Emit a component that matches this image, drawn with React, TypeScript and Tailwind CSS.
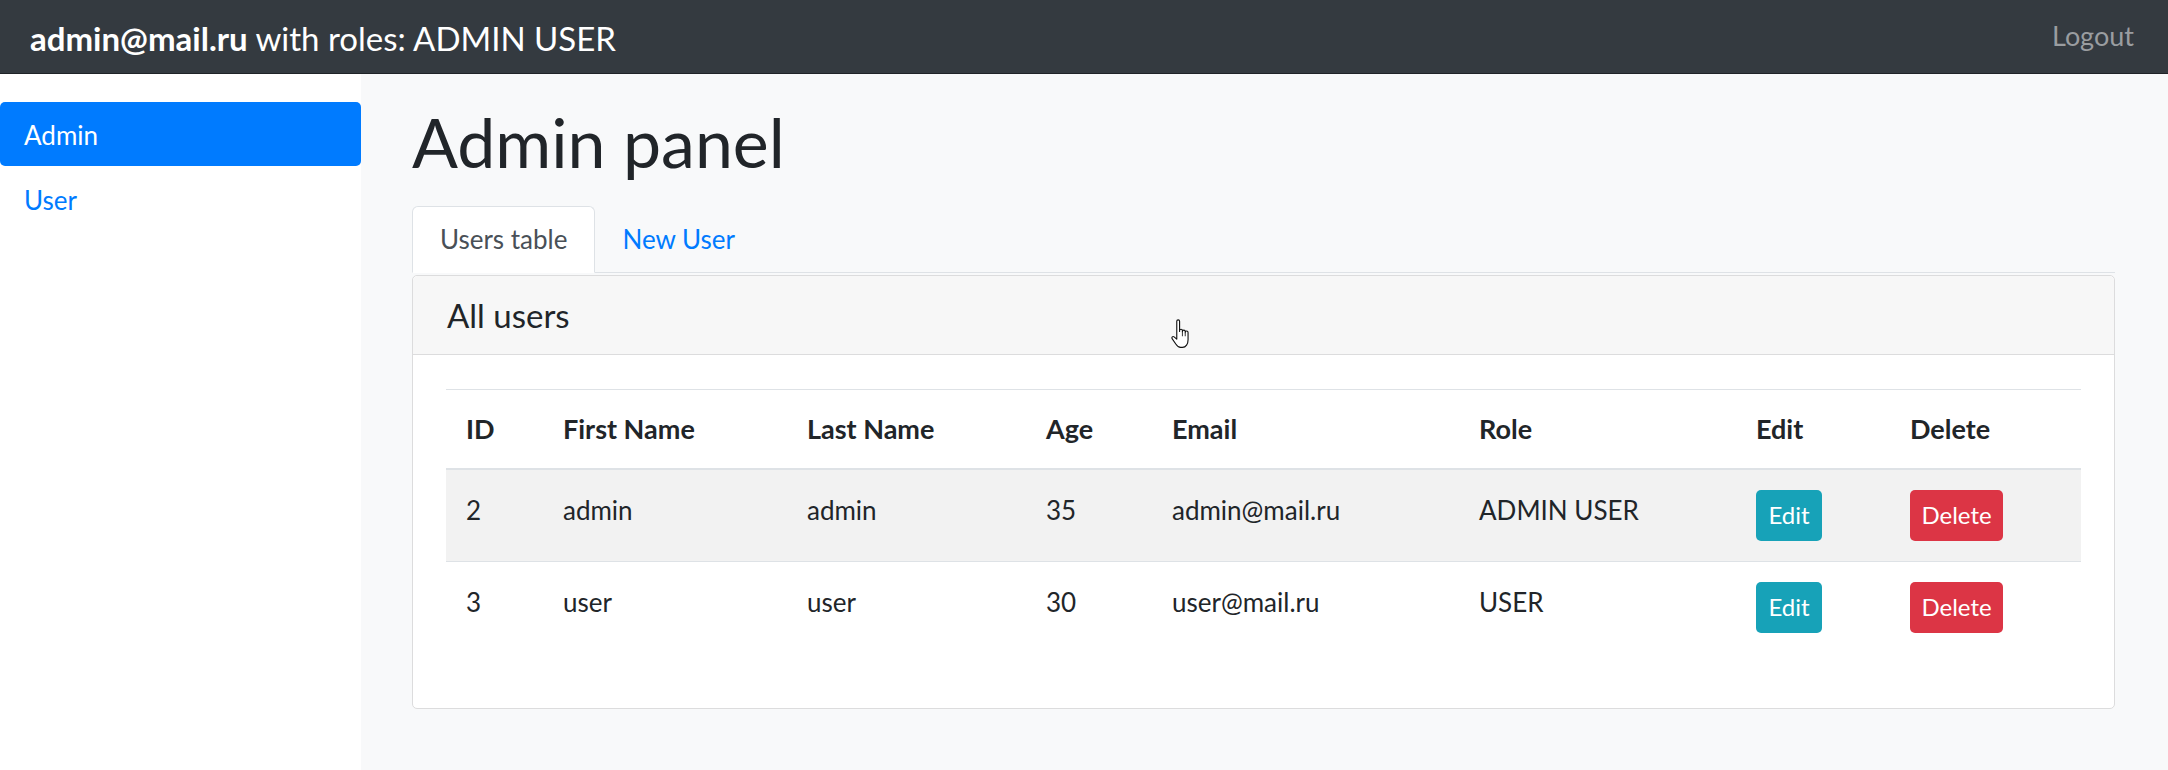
import React from 'react';

interface UserRow {
    id: number;
    firstName: string;
    lastName: string;
    age: number;
    email: string;
    role: string;
}

const USERS: UserRow[] = [
    { id: 2, firstName: 'admin', lastName: 'admin', age: 35, email: 'admin@mail.ru', role: 'ADMIN USER' },
    { id: 3, firstName: 'user', lastName: 'user', age: 30, email: 'user@mail.ru', role: 'USER' },
];

const COLUMNS = [
    { label: 'ID', width: 'w-[97px]' },
    { label: 'First Name', width: 'w-[244px]' },
    { label: 'Last Name', width: 'w-[239px]' },
    { label: 'Age', width: 'w-[126px]' },
    { label: 'Email', width: 'w-[307px]' },
    { label: 'Role', width: 'w-[277px]' },
    { label: 'Edit', width: 'w-[154px]' },
    { label: 'Delete', width: '' },
];

// the mouse pointer that was caught in the screenshot
const HandCursor: React.FC = () => (
    <svg width="24" height="32" viewBox="0 0 17 22" className="absolute left-[1169px] top-[318px]">
        <path
            d="M5.5 12V2a1 1 0 0 1 2 0v7.2V8.6a1 1 0 0 1 2 0v1.2V9.3a1 1 0 0 1 2 0v1V9.9a1 1 0 0 1 2 0V15c0 3-1.5 5.5-4 5.5H8.2c-1.5 0-2.5-1-3.4-2.4L2.2 14.3c-.6-.9.5-2 1.4-1.3l1.9 1.6Z"
            fill="white"
            stroke="#111"
            strokeWidth="0.8"
            strokeLinejoin="round"
        />
        <path d="M9.5 10v2.6M11.5 10.5v2.1" stroke="#111" strokeWidth="0.6" />
    </svg>
);

const Navbar: React.FC = () => (
    <header className="flex h-[74px] shrink-0 items-center justify-between border-b border-[#1f2327] bg-[#343a40] pl-[30px] pr-[34px]">
        <div className="mt-[4px] text-[33px] leading-[1.2] text-white">
            <span className="font-bold">admin@mail.ru</span> with roles: ADMIN USER
        </div>
        <a className="text-[27px] leading-[1.2] text-[#9a9da0]">Logout</a>
    </header>
);

const Sidebar: React.FC = () => (
    <aside className="w-[361px] shrink-0 bg-white pt-[28px]">
        <ul>
            <li className="flex h-[64px] items-center rounded-[5px] bg-[#007bff] px-[24px] pt-[3px] text-[26px] text-white">Admin</li>
            <li className="flex h-[64px] items-center px-[24px] pt-[5px] text-[26px] text-[#007bff]">User</li>
        </ul>
    </aside>
);

const UsersTable: React.FC = () => (
    <table className="w-full table-fixed text-[26px] text-[#212529]">
        <thead>
            <tr>
                {COLUMNS.map(col => (
                    <th
                        key={col.label}
                        className={`${col.width} border-t border-b-2 border-[#dee2e6] px-[20px] pt-[20px] pb-[20px] text-left align-top text-[27px] font-bold leading-[38px]`}
                    >
                        {col.label}
                    </th>
                ))}
            </tr>
        </thead>
        <tbody>
            {USERS.map((u, i) => (
                <tr key={u.id} className={i % 2 === 0 ? 'bg-[#f2f2f2]' : 'bg-white'}>
                    <td className="border-t border-[#dee2e6] px-[20px] py-[20px] align-top leading-[40px]">{u.id}</td>
                    <td className="border-t border-[#dee2e6] px-[20px] py-[20px] align-top leading-[40px]">{u.firstName}</td>
                    <td className="border-t border-[#dee2e6] px-[20px] py-[20px] align-top leading-[40px]">{u.lastName}</td>
                    <td className="border-t border-[#dee2e6] px-[20px] py-[20px] align-top leading-[40px]">{u.age}</td>
                    <td className="border-t border-[#dee2e6] px-[20px] py-[20px] align-top leading-[40px]">{u.email}</td>
                    <td className="border-t border-[#dee2e6] px-[20px] py-[20px] align-top leading-[40px]">{u.role}</td>
                    <td className="border-t border-[#dee2e6] px-[20px] py-[20px] align-top">
                        <div className="flex">
                            <button className="flex h-[51px] w-[66px] items-center justify-center rounded-[5px] bg-[#17a2b8] text-[24px] text-white">
                                Edit
                            </button>
                        </div>
                    </td>
                    <td className="border-t border-[#dee2e6] px-[20px] py-[20px] align-top">
                        <div className="flex">
                            <button className="flex h-[51px] w-[93px] items-center justify-center rounded-[5px] bg-[#dc3545] text-[24px] text-white">
                                Delete
                            </button>
                        </div>
                    </td>
                </tr>
            ))}
        </tbody>
    </table>
);

const AdminPanel: React.FC = () => (
    <main className="min-w-0 flex-1 bg-[#f8f9fa] pl-[51px] pr-[53px]">
        <h1 className="mt-[27px] text-[68px] font-normal leading-[1.2] text-[#212529]">Admin panel</h1>

        <ul className="mt-[23px] flex h-[67px] border-b border-[#dee2e6]">
            <li className="-mb-px flex h-[67px] items-center rounded-t-[6px] border border-[#dee2e6] border-b-white bg-white px-[27px] text-[26px] text-[#495057]">
                Users table
            </li>
            <li className="-mb-px flex h-[67px] items-center border border-transparent px-[26px] text-[26px] text-[#007bff]">
                New User
            </li>
        </ul>

        <section className="mt-[2px] rounded-[5px] border border-[#dcdcdd] bg-white">
            <div className="flex h-[79px] items-center rounded-t-[5px] border-b border-[#dcdcdd] bg-[#f7f7f7] px-[34px] pt-[3px]">
                <h5 className="text-[33px] leading-[1.2] text-[#212529]">All users</h5>
            </div>
            <div className="px-[33px] pt-[34px] pb-[31px]">
                <div className="mb-[24px]">
                    <UsersTable />
                </div>
            </div>
        </section>
    </main>
);

export default function App() {
    return (
        <div className="relative flex h-screen flex-col overflow-hidden font-['Lato','Liberation_Sans',sans-serif]">
            <Navbar />
            <div className="flex flex-1">
                <Sidebar />
                <AdminPanel />
            </div>
            <HandCursor />
        </div>
    );
}
